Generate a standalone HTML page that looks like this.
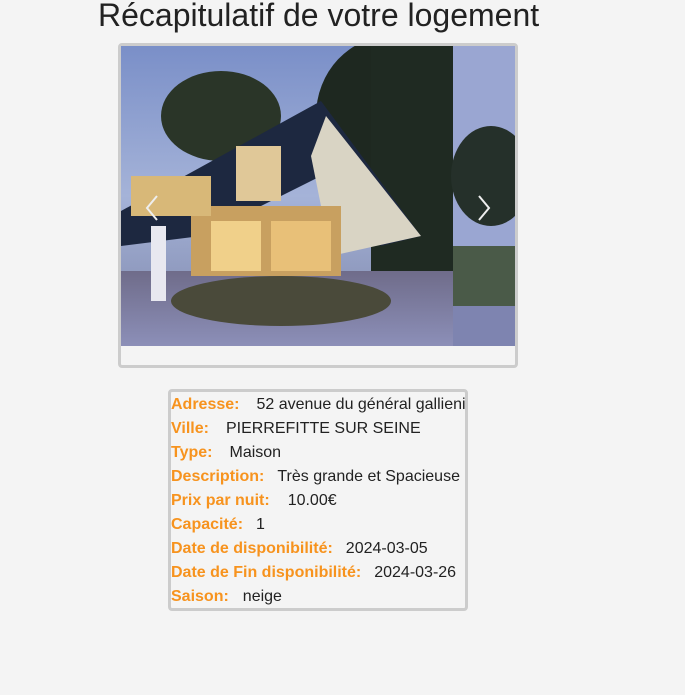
<!DOCTYPE html>
<html><head><meta charset="utf-8"><style>
body{margin:0;background:#f4f4f4;font-family:"Liberation Sans",sans-serif;color:#222;width:685px;height:695px;overflow:hidden;position:relative}
h1{position:absolute;top:-3px;left:98px;margin:0;font-weight:normal;font-size:32px;color:#222;white-space:nowrap}
.car{position:absolute;left:118px;top:43px;width:394px;height:319px;border:3px solid #ccc;border-radius:4px;background:#f4f4f4}
.info{position:absolute;left:168px;top:389px;width:294px;height:216px;border:3px solid #ccc;border-radius:4px;font-size:16px}
.info div{height:24px;line-height:24px;white-space:nowrap;padding-left:0;margin-top:1px;margin-bottom:-1px}
.info b{color:#f7931e;display:inline-block}
</style></head><body>
<h1>Récapitulatif de votre logement</h1>
<div class="car">
<svg width="394" height="300" style="position:absolute;left:0;top:0">
<defs>
<linearGradient id="sky" x1="0" y1="0" x2="0" y2="1"><stop offset="0" stop-color="#7a8fc8"/><stop offset="0.5" stop-color="#a5b3d8"/><stop offset="1" stop-color="#7c84a8"/></linearGradient>
<linearGradient id="gr" x1="0" y1="0" x2="0" y2="1"><stop offset="0" stop-color="#6f6c8a"/><stop offset="1" stop-color="#8c8fb8"/></linearGradient>
</defs>
<rect width="394" height="300" fill="url(#sky)"/>
<ellipse cx="100" cy="70" rx="60" ry="45" fill="#2a3528"/>
<ellipse cx="270" cy="70" rx="75" ry="80" fill="#1e2820"/>
<rect x="250" y="0" width="82" height="230" fill="#1f2a22"/>
<rect x="0" y="225" width="332" height="75" fill="url(#gr)"/>
<polygon points="0,165 100,110 200,55 300,190 260,200 200,130 80,190 0,200" fill="#1d2840"/>
<polygon points="205,70 300,190 210,210 190,110" fill="#d9d4c4"/>
<rect x="70" y="160" width="150" height="70" fill="#c8a060"/>
<rect x="90" y="175" width="50" height="50" fill="#f0d08a"/>
<rect x="150" y="175" width="60" height="50" fill="#e8c078"/>
<rect x="115" y="100" width="45" height="55" fill="#e0c898"/>
<rect x="10" y="130" width="80" height="40" fill="#d8b878"/>
<ellipse cx="160" cy="255" rx="110" ry="25" fill="#4a4a3a"/>
<rect x="30" y="180" width="15" height="75" fill="#e8e8f0"/>
<rect x="332" y="0" width="62" height="300" fill="#9aa6d2"/>
<ellipse cx="370" cy="130" rx="40" ry="50" fill="#25302a"/>
<rect x="332" y="200" width="62" height="60" fill="#4a5a48"/>
<rect x="332" y="260" width="62" height="40" fill="#7e84b0"/>
<polyline points="36,150 26,162 36,174" fill="none" stroke="#eee" stroke-width="2"/>
<polyline points="358,150 368,162 358,174" fill="none" stroke="#eee" stroke-width="2"/>
</svg>
</div>
<div class="info">
<div><b style="margin-right:17px">Adresse:</b>52 avenue du général gallieni</div>
<div><b style="margin-right:17px">Ville:</b>PIERREFITTE SUR SEINE</div>
<div><b style="margin-right:17px">Type:</b>Maison</div>
<div><b style="margin-right:13px">Description:</b>Très grande et Spacieuse</div>
<div><b style="margin-right:18px">Prix par nuit:</b>10.00€</div>
<div><b style="margin-right:13px">Capacité:</b>1</div>
<div><b style="margin-right:13px">Date de disponibilité:</b>2024-03-05</div>
<div><b style="margin-right:13px">Date de Fin disponibilité:</b>2024-03-26</div>
<div><b style="margin-right:14px">Saison:</b>neige</div>
</div>
</body></html>
